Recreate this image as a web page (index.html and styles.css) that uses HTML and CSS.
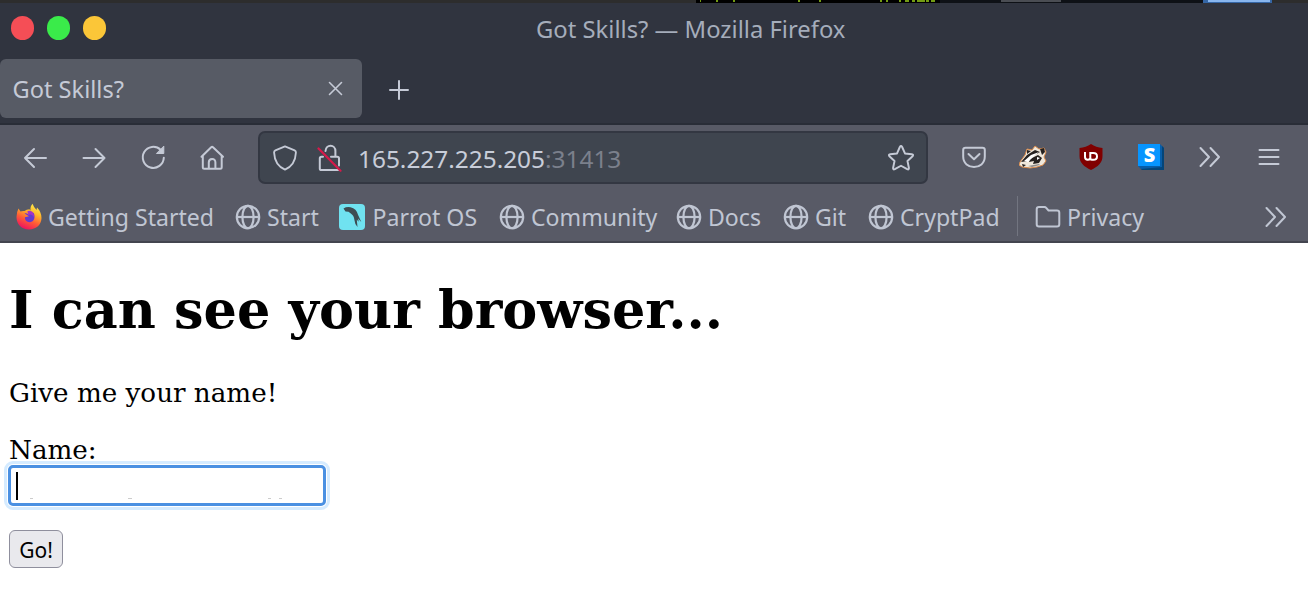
FILE: index.html
```html
<!DOCTYPE html>
<html lang="en">
<head>
<meta charset="utf-8">
<title>Got Skills?</title>
<link rel="stylesheet" href="styles.css">
</head>
<body>
<svg class="defs" width="0" height="0">
  <symbol id="globe" viewBox="0 0 26 26"><g fill="none" stroke="currentColor" stroke-width="2.200"><circle cx="13" cy="13" r="11.2"/><ellipse cx="13" cy="13" rx="5.6" ry="11.2"/><path d="M1.8 13h22.400"/></g></symbol>
  <symbol id="more" viewBox="0 0 24 22"><path d="M2.500 2l8.500 9-8.500 9M12.500 2l8.500 9-8.500 9" fill="none" stroke="currentColor" stroke-width="2" stroke-linecap="round" stroke-linejoin="round"/></symbol>
</svg>
<div class="desktop"><svg width="1308" height="3"><path fill="#2d2d2d" d="M0 0h1308v3H0z"/><path fill="#000" d="M696 0h244v3H696z"/><path fill="#0e1116" d="M940 0h264v3H940z"/><path fill="#739c14" d="M700 0h1v2h-1zM716 0h2v2h-2zM733 0h2v2h-2zM798 0h2v2h-2zM819 0h2v2h-2zM880 0h2v2h-2zM886 0h2v2h-2zM899 0h2v2h-2zM905 0h4v2h-4zM912 0h3v2h-3zM917 0h8v2h-8zM926 0h3v2h-3zM931 0h4v2h-4z"/><path fill="#4a4d53" d="M1001 0h60v2h-60z"/><path fill="#3566a5" d="M1203 0h69v3h-69z"/><path fill="#88b6ee" d="M1208 0h62v2h-62z"/></svg></div>
<header class="titlebar">
  <div class="lights"><i class="light red"></i><i class="light green"></i><i class="light yellow"></i></div>
  <span class="window-title">Got Skills? — Mozilla Firefox</span>
</header>
<div class="tabs">
  <div class="tab"><span>Got Skills?</span><svg width="15" height="15" viewBox="0 0 15 15"><path d="M1.500 1.500l12 12M13.500 1.500l-12 12" stroke="currentColor" stroke-width="1.600" stroke-linecap="round"/></svg></div>
  <svg class="new-tab" width="22" height="22" viewBox="0 0 22 22"><path d="M11 2v18M2 11h18" stroke="currentColor" stroke-width="2" stroke-linecap="round"/></svg>
</div>
<nav class="toolbar">
  <div class="nav-buttons">
    <svg width="26" height="26" viewBox="0 0 26 26"><path d="M24 14H3M12 5l-9 9 9 9"/></svg>
    <svg width="26" height="26" viewBox="0 0 26 26"><path d="M2.500 14h21M14.500 5l9 9-9 9"/></svg>
    <svg width="26" height="26" viewBox="0 0 26 26"><path d="M20.600 5.800A10.500 10.500 0 1 0 23.800 13.800"/><path d="M23.800 2.500v7h-7z" fill="currentColor" stroke-width="1"/></svg>
    <svg width="26" height="26" viewBox="0 0 26 26"><path d="M2.500 12.700L12.200 3.300q.9-.8 1.800 0L24 12.700M3.800 11.500v11.700q0 1.500 1.500 1.500h15.900q1.500 0 1.500-1.500V11.500M9.800 24.700v-6.200q0-3.500 3.300-3.500t3.300 3.500v6.200"/></svg>
  </div>
  <div class="url">
    <svg class="shield" width="28" height="28" viewBox="-1 -1 30 30"><path d="M14 1.500l10.300 4.300q1.500.7 1.400 2.300C25.300 17 22 23 14 26.500 6 23 2.700 17 2.300 8.100q-.1-1.600 1.400-2.300z"/></svg>
    <svg class="lock" width="26" height="28" viewBox="0 0 26 28"><path d="M8.500 7C9-.1 18.400.2 18.400 7v5.500M6 12.700H4.500q-1.700 0-1.700 1.700v10q0 1.700 1.700 1.700h16.700M14 12.700h6.300q1.700 0 1.700 1.700v7"/><path class="slash" d="M1.500 4.500L23.500 26.700"/></svg>
    <span class="address">165.227.225.205<span class="port">:31413</span></span>
    <svg class="star" width="28" height="28" viewBox="-.5 -.5 29 29"><path d="M12.800 2.600q1.200-2 2.400 0l2.900 6.700 7.100.8q2.200.4.800 2.100l-5.300 4.900 1.500 7.200q.2 2.200-1.800 1.300L14 22l-6.400 3.600q-2 .9-1.800-1.300l1.500-7.200L2 12.200q-1.400-1.700.8-2.100l7.100-.8z"/></svg>
  </div>
  <div class="extensions">
    <svg width="26" height="26" viewBox="0 0 26 26"><path d="M4.500 3.800h17q2.300 0 2.300 2.300v6.500c0 14-21.600 14-21.600 0V6.100q0-2.300 2.300-2.300zM7.500 10l5.500 5.300 5.500-5.300"/></svg>
    <svg class="picture" width="28" height="26" viewBox="0 0 28 26"><path fill="#efe8dc" stroke="#d98b4c" stroke-width="1" d="M1 18l5-7 2-6 5 1 3-4 4 3 5-1 2 4-2 5 2 4-3 4-6 2-7 1-8-1-3-2z"/><path fill="#25211f" d="M2 18l6-7 8-5 5 2-7 4-5 5zM11 15l8-4 4 3-3 5-6 1 1-3-5 1zM21 5l4-1 1 4-3 3zM8 6l4 1-4 3zM3 20l4 1-3 2z"/><path fill="#fff" d="M5 17l7-6 8-3-6 5-5 5zM18 13l3 1-3 2z"/><path fill="#8d8b89" d="M9 22l11-2 1 1-8 2z"/></svg>
    <svg class="picture ublock" width="26" height="26" viewBox="0 0 26 26"><path fill="#800000" d="M13 0q5 3.500 11.500 4v8c0 7-4.500 10.500-11.500 14C6 22.500 1.500 19 1.500 12V4Q8 3.500 13 0z"/><g fill="none" stroke="#fff" stroke-width="2"><path d="M7 8v5q0 2.700 2.700 2.700 1.600 0 2.600-1.200V8"/><path d="M12.500 9h2.800q3.700 0 3.700 3.400t-3.700 3.400h-1.500q-1.500 0-1.500-1.500"/></g></svg>
    <svg class="picture" width="28" height="28" viewBox="0 0 28 28"><path fill="#075da8" d="M1 23l4 4h22V5l-4-4z"/><path fill="#044579" d="M4 26l1 1h22V5l-2-2v21z"/><path fill="#0795ff" d="M1 1h22v22H1z"/><text class="s-mark" x="12.500" y="19">S</text></svg>
    <svg class="chevrons" width="24" height="22"><use href="#more"/></svg>
    <svg class="menu" width="22" height="18" viewBox="0 0 22 18"><path d="M1.500 2h19M1.500 9h19M1.500 16h19"/></svg>
  </div>
</nav>
<nav class="bookmarks">
  <a class="b1"><svg width="26" height="28" viewBox="0 0 26 28"><defs><linearGradient id="flame" x1=".8" y1="0" x2=".35" y2="1"><stop offset="0" stop-color="#fff44f"/><stop offset=".35" stop-color="#ffb52b"/><stop offset=".65" stop-color="#ff5b36"/><stop offset="1" stop-color="#ed1260"/></linearGradient></defs><path fill="url(#flame)" d="M.5 14Q.7 8.500 2.500 5.500l2 3q1.700-.7 4-.4 2-1.500 5-1.800l1 1.500Q14 3.500 16.500.8q1.500 4 4 6.100l.5-2.400q4.500 4.500 4.500 10.500c0 6.500-5.200 11.500-12.500 11.500S.5 21.500.5 14z"/><path fill="#6539cf" d="M8.500 10.500c2-.7 3 1 5 .5l4-1.200c1.500 2 1.500 7-1 8.500-4 2.500-8-.5-7.500-4l4-1z"/><path fill="#a433c8" d="M11.500 8q6.500-1.500 6.500 6l-2-2q-1.500-1-4 .3z"/></svg>Getting Started</a>
  <a class="b2"><svg width="26" height="26"><use href="#globe"/></svg>Start</a>
  <a class="b3"><svg width="26" height="26" viewBox="0 0 26 26"><rect width="26" height="26" rx="4" fill="#70e2f0"/><path fill="#3d4d53" d="M4.500 4.500q3-2 7-1.300c4 .8 6.500 3.500 7.500 7.500l3.300 7.300-3.300-3.500.8 3.200-2-2 .7 7.300q-2.800-3-3.200-7.500-.3-4-3.500-6L9.500 7.800l-3-.3z"/></svg>Parrot OS</a>
  <a class="b4"><svg width="26" height="26"><use href="#globe"/></svg>Community</a>
  <a class="b5"><svg width="26" height="26"><use href="#globe"/></svg>Docs</a>
  <a class="b6"><svg width="26" height="26"><use href="#globe"/></svg>Git</a>
  <a class="b7"><svg width="26" height="26"><use href="#globe"/></svg>CryptPad</a>
  <a class="b8"><svg width="26" height="24" viewBox="0 0 26 24"><path d="M4 2h5.500q1 0 1.700.8L13.500 5.500H22q2.300 0 2.300 2.300v11.400q0 2.300-2.300 2.300H4q-2.300 0-2.300-2.300V4.300Q1.700 2 4 2z" fill="none" stroke="currentColor" stroke-width="2"/></svg>Privacy</a>
  <svg class="overflow" width="24" height="22"><use href="#more"/></svg>
</nav>
<main class="page">
  <h1>I can see your browser...</h1>
  <p>Give me your name!</p>
  <form>
    <label for="name">Name:</label>
    <div class="field"><i class="caret"></i><input id="name" type="text"><svg class="specks" width="300" height="2"><path fill="#ccc" d="M14 0h3v1h-3zM112 0h4v1h-4zM252 0h3v1h-3zM263 0h3v1h-3z"/></svg></div>
    <button type="button">Go!</button>
  </form>
</main>
</body>
</html>
```
FILE: styles.css
```css
* { box-sizing: border-box; }
body { margin: 0; width: 1308px; height: 590px; overflow: hidden; background: #fff; font-family: "Noto Sans", sans-serif; color: #c5cad6; }
svg { display: block; flex: none; }
.defs { position: absolute; }
.desktop { height: 3px; }
.titlebar { height: 56px; background: #30343f; display: grid; grid-template-columns: 536px 1fr; }
.lights { display: flex; gap: 12.500px; padding: 13px 0 0 10.500px; }
.light { width: 23.500px; height: 23.500px; border-radius: 50%; }
.red { background: #f54e56; }
.green { background: #3aeb4a; }
.yellow { background: #fbc638; }
.window-title { color: #a5adbb; font-size: 23.800px; line-height: 52px; white-space: nowrap; }
.tabs { height: 66px; background: #30343f; display: flex; align-items: flex-start; border-bottom: 2px solid #292d37; }
.tab { width: 362px; height: 59px; border-radius: 6px; background: #575b65; display: flex; align-items: center; justify-content: space-between; padding: 0 19px 0 12.500px; font-size: 23.600px; line-height: 59px; }
.tab span { padding-top: 2px; }
.new-tab { margin: 20px 0 0 26px; }
.toolbar { height: 68px; background: #585a66; display: flex; padding-top: 6px; }
.toolbar svg:not(.picture) { fill: none; stroke: currentColor; stroke-width: 2; stroke-linecap: round; stroke-linejoin: round; }
.nav-buttons { width: 258px; display: flex; gap: 33px; padding: 13px 0 0 22px; }
.url { width: 670px; height: 53px; border: 2px solid #333742; border-radius: 7px; background: #3f454f; display: flex; align-items: center; padding: 0 11px; }
.shield { margin-right: 18px; }
.toolbar .lock .slash { stroke: #d6194a; stroke-width: 2.200; }
.address { margin-left: 15px; flex: 1; padding-top: 1px; font-size: 24.400px; line-height: 49px; color: #c8cdd9; white-space: nowrap; }
.port { color: #7b808c; }
.extensions { flex: 1; display: flex; align-items: center; gap: 31.500px; height: 52px; padding-left: 33px; }
.ublock { margin-right: 1px; }
.chevrons { margin-left: 2px; }
.menu { margin-left: 4px; }
.s-mark { font: 900 20px "Noto Sans", sans-serif; fill: #fff; text-anchor: middle; }
.bookmarks { height: 50px; background: #585a66; border-bottom: 2px solid #43454f; display: flex; padding-left: 16px; font-size: 23.100px; line-height: 46px; color: #c0c6d3; }
.bookmarks a { display: flex; align-items: center; gap: 6px; height: 47px; white-space: nowrap; }
.b1 { width: 219px; }
.b2 { width: 104px; }
.b3 { width: 160px; }
.bookmarks .b3 { gap: 7.500px; }
.b4 { width: 177px; }
.b5 { width: 107px; }
.b6 { width: 85px; }
.b7 { width: 149px; }
.b8 { width: 247px; padding-left: 18px; position: relative; }
.b8::before { content: ""; position: absolute; left: 0; top: 3px; width: 1px; height: 40px; background: #727580; }
.overflow { margin-top: 13px; }
.page { padding: 0 9px; color: #000; font: 26.200px/30px "DejaVu Serif", serif; }
h1 { margin: 36px 0 0; font-size: 52.450px; line-height: 62px; white-space: nowrap; }
p { margin: 37px 0 27px; }
label { display: block; }
.field { margin-left: -1px; width: 318px; height: 41px; border: 3px solid #4a90e2; border-radius: 5px; outline: 3px solid #d5ebff; outline-offset: 1px; position: relative; background: #fff; padding: 4px 5px; display: flex; }
.field input { border: 0; outline: 0; width: 280px; padding: 0; background: transparent; font: 22px "Noto Sans", sans-serif; }
.caret { width: 2px; height: 28px; background: #000; }
.specks { position: absolute; left: 5px; bottom: 3px; }
button { display: block; margin-top: 24px; width: 54px; height: 38px; border: 1.500px solid #8f8f9d; border-radius: 6px; background: #e9e9ed; padding: 2px 0 0; color: #000; font: 21px/34px "Noto Sans", sans-serif; }
```
